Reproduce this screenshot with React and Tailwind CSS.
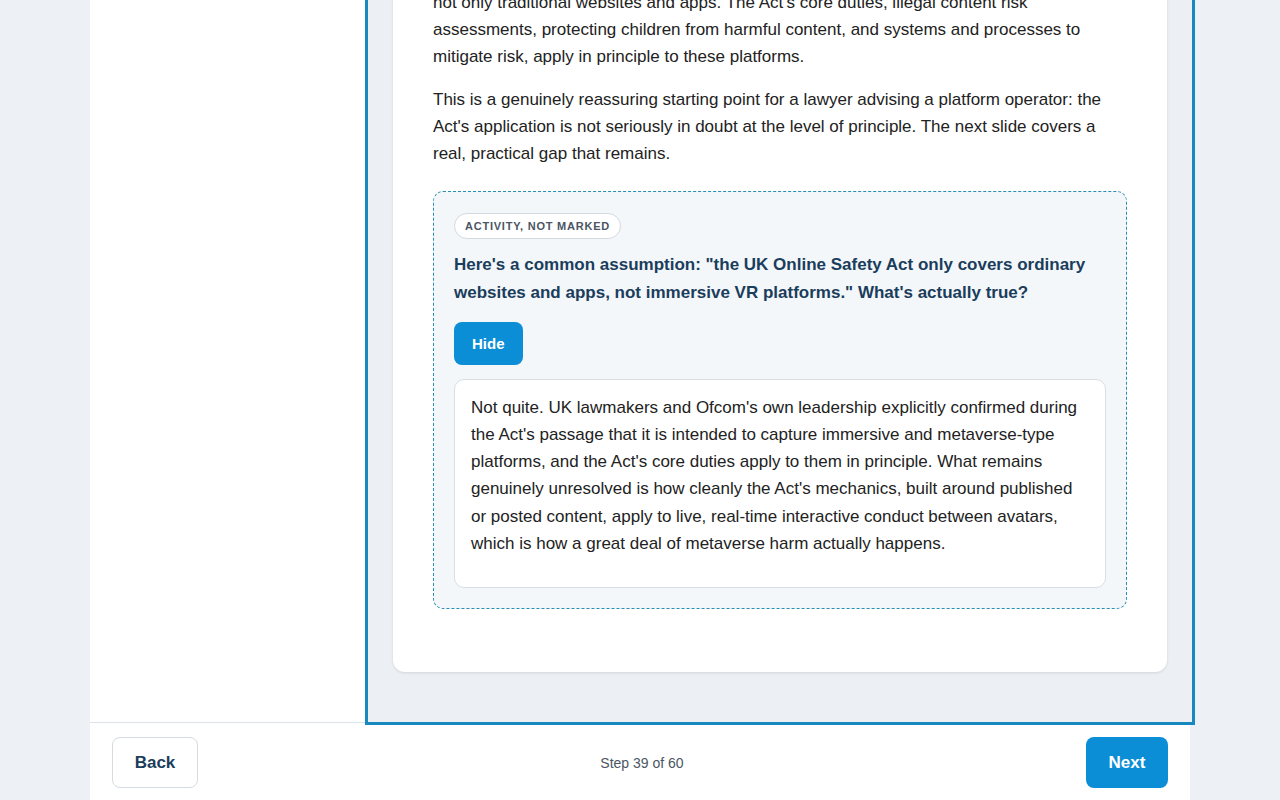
import { useState } from 'react';

const body = "font-['Liberation_Sans',Arial,sans-serif]";

export default function App() {
  const [open, setOpen] = useState(true);

  return (
    <div className={`h-[800px] bg-[#edf1f5] ${body}`}>
      <div className="mx-auto flex h-full w-[1100px] flex-col bg-white">

        {/* Sidebar + lesson area */}
        <div className="flex min-h-0 flex-1">
          <aside className="w-[278px] shrink-0 bg-white" />

          <main className="relative z-10 flex w-[824px] shrink-0 flex-col justify-end overflow-hidden bg-[#ecf0f4] px-[25px] pb-[50px] outline-[3px] outline-solid outline-[#1788c0]">
            <div className="rounded-xl bg-white px-10 pb-10 pt-10 text-[17px] leading-[27px] text-[#222] shadow-[0_1px_3px_rgba(15,23,42,0.12)]">
              <p className="mb-4">
                Parliament and Ofcom have both been clear that the Online Safety Act is technology-neutral.
                It reaches user-to-user services on VR headsets and in metaverse environments,<br />
                not only traditional websites and apps. The Act's core duties, illegal content risk
                assessments, protecting children from harmful content, and systems and processes to
                mitigate risk, apply in principle to these platforms.
              </p>
              <p className="mb-6">
                This is a genuinely reassuring starting point for a lawyer advising a platform operator: the
                Act's application is not seriously in doubt at the level of principle. The next slide covers a
                real, practical gap that remains.
              </p>

              {/* Unmarked activity */}
              <div className="mb-[23px] rounded-[10px] border border-dashed border-[#2a8db3] bg-[#f3f7fa] px-5 pb-5 pt-[21px]">
                <div className="flex">
                  <span className="h-[26px] rounded-full border border-[#d3d9e0] bg-white px-[10px] text-[11px] font-bold uppercase leading-[24px] tracking-[0.07em] text-[#4b5563]">
                    Activity, not marked
                  </span>
                </div>
                <p className="mt-3 text-[17px] font-bold leading-[28px] text-[#1b3d5c]">
                  Here's a common assumption: "the UK Online Safety Act only covers ordinary
                  websites and apps, not immersive VR platforms." What's actually true?
                </p>
                <button
                  onClick={() => setOpen(!open)}
                  className="mt-[15px] block h-[43px] rounded-lg bg-[#0b8ed6] px-[18px] text-[15px] font-bold text-white"
                >
                  {open ? 'Hide' : 'Show'}
                </button>
                {open && (
                  <div className="mt-[14px] rounded-[10px] border border-[#d8dee5] bg-white px-4 pb-[14px] pt-[14px]">
                    <p className="mb-4 text-[17px] leading-[1.6] text-[#222]">
                      Not quite. UK lawmakers and Ofcom's own leadership explicitly confirmed during
                      the Act's passage that it is intended to capture immersive and metaverse-type
                      platforms, and the Act's core duties apply to them in principle. What remains
                      genuinely unresolved is how cleanly the Act's mechanics, built around published
                      or posted content, apply to live, real-time interactive conduct between avatars,
                      which is how a great deal of metaverse harm actually happens.
                    </p>
                  </div>
                )}
              </div>
            </div>
          </main>
        </div>

        {/* Step navigation */}
        <footer className="flex h-[78px] shrink-0 items-start justify-between border-t border-[#dde3e9] bg-white px-[22px] pt-[14px]">
          <button className="h-[51px] w-[86px] rounded-lg border border-[#d5dbe2] bg-white text-[17px] font-bold text-[#1b3d5c]">
            Back
          </button>
          <span className="mt-4 text-[14px] leading-5 text-[#4b5563]">Step 39 of 60</span>
          <button className="h-[51px] w-[82px] rounded-lg bg-[#0b8ed6] text-[17px] font-bold text-white">
            Next
          </button>
        </footer>
      </div>
    </div>
  );
}
